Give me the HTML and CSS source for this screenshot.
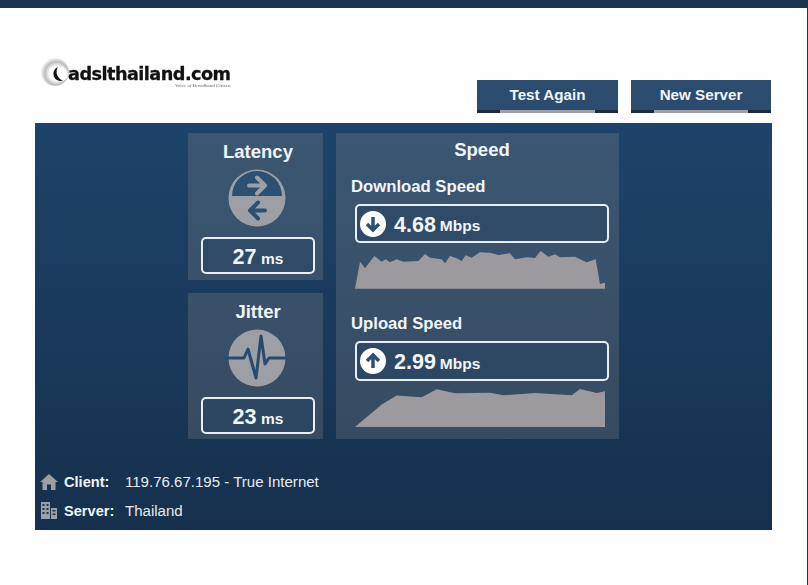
FILE: index.html
```html
<!DOCTYPE html>
<html lang="en">
<head>
	<meta charset="UTF-8">
	<title>Speed Test</title>
	<link rel="stylesheet" href="styles.css">
</head>
<body>
	<div class="topbar"></div>

	<div class="head">
		<div class="logo">
			<svg class="logo-mark" width="30" height="30" viewBox="0 0 30 30">
				<defs>
					<radialGradient id="halo" cx="55%" cy="55%" r="55%">
						<stop offset="45%" stop-color="#fff"/>
						<stop offset="75%" stop-color="#bdbdbd"/>
						<stop offset="100%" stop-color="#f4f4f4"/>
					</radialGradient>
				</defs>
				<circle cx="14" cy="14" r="14" fill="url(#halo)"/>
				<circle cx="20" cy="16" r="7" fill="#fff"/>
				<path d="M17 9A7 7 0 0 0 22 22.500A9 9 0 0 1 17 9" fill="#111"/>
			</svg>
			<div class="logo-words">
				<div class="logo-name">adslthailand.com</div>
				<div class="logo-sub">Voice of Broadband Citizen</div>
			</div>
		</div>
		<div class="buttons">
			<button class="btn">Test Again</button>
			<button class="btn">New Server</button>
		</div>
	</div>

	<div class="panel">
		<div class="cards">
			<div class="left-col">
				<div class="card small">
					<h2>Latency</h2>
					<svg class="gauge" width="58" height="58" viewBox="0 0 58 58">
						<circle cx="29" cy="29" r="28.500" fill="#9c9fa6"/>
						<path d="M4 27A25 25 0 0 1 54 27Z" fill="#2c4f72"/>
						<path d="M21 16.500H36M29 8.500L37 16.500L29 24.500" fill="none" stroke="#9c9fa6" stroke-width="4" stroke-linecap="round" stroke-linejoin="round"/>
						<path d="M37 41.500H22M30 33.500L22 41.500L30 49.500" fill="none" stroke="#2c4f72" stroke-width="4" stroke-linecap="round" stroke-linejoin="round"/>
					</svg>
					<div class="value"><b>27</b> <span>ms</span></div>
				</div>
				<div class="card small">
					<h2>Jitter</h2>
					<svg class="gauge" width="66" height="60" viewBox="0 0 66 60">
						<circle cx="33" cy="30" r="28.500" fill="#9c9fa6"/>
						<path d="M0 30H20L24 21L32 50L37 8L41 36L45 30H63" fill="none" stroke="#2a4a6b" stroke-width="3" stroke-linejoin="round"/>
					</svg>
					<div class="value"><b>23</b> <span>ms</span></div>
				</div>
			</div>

			<div class="card speed">
				<h2>Speed</h2>
				<h3>Download Speed</h3>
				<div class="value wide">
					<svg width="26" height="26" viewBox="0 0 26 26">
						<circle cx="13" cy="13" r="13" fill="#fff"/>
						<path d="M13 6V18.500M7 13L13 19L19 13" fill="none" stroke="#2f5073" stroke-width="3.500"/>
					</svg>
					<b>4.68</b> <span>Mbps</span>
				</div>
				<svg class="chart" width="250" height="39" viewBox="60 360 750 117" preserveAspectRatio="none">
					<polygon fill="#9c9a9f" points="60,476 75,395 90,415 118,378 140,395 152,388 165,397 185,388 205,395 250,393 270,372 285,383 320,388 330,400 345,378 365,385 380,393 392,376 410,383 435,367 465,368 490,375 525,370 540,388 575,382 600,384 617,363 640,380 660,373 675,382 720,380 755,397 782,388 795,462 810,458 810,476"/>
				</svg>
				<h3 class="second">Upload Speed</h3>
				<div class="value wide up">
					<svg width="26" height="26" viewBox="0 0 26 26">
						<circle cx="13" cy="13" r="13" fill="#fff"/>
						<path d="M13 20V7.500M7 13L13 7L19 13" fill="none" stroke="#2f5073" stroke-width="3.500"/>
					</svg>
					<b>2.99</b> <span>Mbps</span>
				</div>
				<svg class="chart" width="250" height="39" viewBox="60 262 750 118" preserveAspectRatio="none">
					<polygon fill="#9c9a9f" points="60,380 140,312 185,285 260,290 305,266 360,278 465,276 505,284 600,277 710,284 735,265 785,277 810,272 810,380"/>
				</svg>
			</div>
		</div>

		<div class="info">
			<div class="info-row">
				<svg width="18" height="16" viewBox="0 0 18 16">
					<path d="M9 0L18 8H15.500V16H11V10.500H7V16H2.500V8H0Z" fill="#9c9fa6"/>
				</svg>
				<b>Client:</b>
				<span>119.76.67.195 - True Internet</span>
			</div>
			<div class="info-row">
				<svg width="18" height="17" viewBox="0 0 18 17">
					<path d="M1 0H10V17H1ZM11 6H17V17H11Z" fill="#9c9fa6"/>
					<path d="M2.500 2H4.500V4H2.500ZM6.500 2H8.500V4H6.500ZM2.500 6H4.500V8H2.500ZM6.500 6H8.500V8H6.500ZM2.500 10H4.500V12H2.500ZM6.500 10H8.500V12H6.500ZM12.500 8H15.500V9.500H12.500ZM12.500 11.500H15.500V13H12.500Z" fill="#173350"/>
				</svg>
				<b>Server:</b>
				<span>Thailand</span>
			</div>
		</div>
	</div>
</body>
</html>
```

FILE: styles.css
```css
*{
	margin: 0;
	padding: 0;
	box-sizing: border-box;
}
body{
	background-color: #fff;
	font-family: "Liberation Sans", Arial, sans-serif;
	color: #f1f5f8;
	width: 808px;
	height: 585px;
	overflow: hidden;
	border-right: 1px solid #1b3551;
}

.topbar{
	height: 8px;
	background-color: #1b3551;
}

/* logo and buttons */
.head{
	height: 115px;
	display: flex;
	justify-content: space-between;
	padding: 50px 36px 0 41px;
}
.logo{
	display: flex;
	align-items: flex-start;
	height: 32px;
	filter: blur(0.5px);
}
.logo-mark{
	margin-right: -3px;
	flex: none;
}
.logo-words{
	padding-top: 7px;
}
.logo-name{
	font-family: "DejaVu Sans", sans-serif;
	font-weight: bold;
	font-size: 17.700px;
	line-height: 18px;
	letter-spacing: -0.55px;
	color: #111;
	-webkit-text-stroke: 0.3px #111;
}
.logo-sub{
	font-family: "Liberation Serif", serif;
	font-size: 5px;
	line-height: 5px;
	text-align: right;
	color: #666;
}
.buttons{
	display: flex;
	gap: 13px;
	padding-top: 22px;
}
.btn{
	position: relative;
	width: 141px;
	height: 33px;
	background-color: #2c4c6f;
	border: none;
	border-bottom: 3px solid #1a2c42;
	color: #f1f5f8;
	font: bold 15.200px/30px "Liberation Sans", Arial, sans-serif;
}
.btn:last-child{
	width: 140px;
}
.btn::after{
	content: "";
	position: absolute;
	left: 23px;
	right: 23px;
	bottom: -3px;
	height: 3px;
	background-color: #9c9fa8;
}

/* main panel */
.panel{
	width: 737px;
	height: 407px;
	margin-left: 35px;
	background: linear-gradient(#1e436a, #16304d);
	padding: 10px 0 0 153px;
}
.cards{
	display: flex;
	gap: 13px;
	height: 306px;
}
.left-col{
	width: 135px;
	display: flex;
	flex-direction: column;
	gap: 13px;
}
.card{
	background-color: rgba(170,160,150,.22);
	text-align: center;
}
.small{
	height: 147px;
	padding: 8px 8px 0 13px;
}
.left-col .small:last-child{
	height: 146px;
}
.card h2{
	font-size: 18.500px;
	line-height: 22px;
	font-weight: bold;
}
.gauge{
	display: block;
	margin: 6px auto 10px;
	position: relative;
	left: -1px;
}
.left-col .small:last-child .gauge{
	margin: 5px auto 9px;
}
.value{
	height: 37px;
	border: 2px solid #e9eef3;
	border-radius: 5px;
	line-height: 36px;
	background-color: rgba(30,60,95,.35);
}
.value b{
	font-size: 21.500px;
}
.value span{
	font-size: 15.500px;
	font-weight: bold;
}
.speed{
	width: 283px;
	height: 306px;
	padding: 6px 6px 0 15px;
}
.speed h3{
	font-size: 16.700px;
	line-height: 20px;
	text-align: left;
	margin-top: 16px;
}
.speed h3.second{
	margin-top: 25px;
}
.wide{
	width: 254px;
	height: 39px;
	margin: 7px 0 0 4px;
	padding-left: 3px;
	display: flex;
	align-items: center;
	gap: 8px;
	line-height: 40px;
}
.wide.up{
	height: 40px;
}
.wide span{
	margin-top: 5px;
	margin-left: -4px;
}
.wide b{
	margin-top: 2px;
}
.chart{
	display: block;
	margin: 7px 0 0 4px;
}

/* client and server */
.info{
	margin: 28px 0 0 -148px;
	font-size: 15.050px;
	color: #e6ebf0;
}
.info-row{
	display: flex;
	align-items: center;
	height: 29px;
}
.info-row svg{
	margin-right: 6px;
	flex: none;
}
.info-row b{
	width: 61px;
	font-size: 14.600px;
	color: #f1f5f8;
}
```
